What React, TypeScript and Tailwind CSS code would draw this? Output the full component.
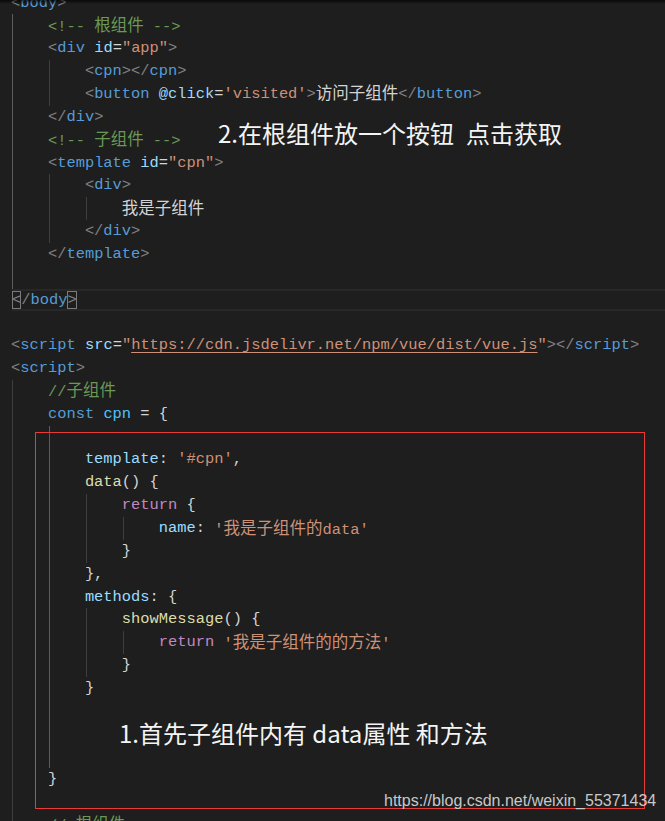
import React from "react";

type Tok = [string, string];
type Line = { ind: number; g: number; a?: number; t: Tok[]; cur?: boolean };

const P = "text-[#808080]";
const TAG = "text-[#569cd6]";
const ATTR = "text-[#9cdcfe]";
const TXT = "text-[#d4d4d4]";
const STR = "text-[#ce9178]";
const COM = "text-[#6a9955]";
const KW = "text-[#569cd6]";
const CONST = "text-[#4fc1ff]";
const FN = "text-[#dcdcaa]";
const RET = "text-[#c586c0]";
const URL = "text-[#ce9178] underline decoration-[#ce9178] underline-offset-[3px]";

const LINES: Line[] = [
  { ind: 0, g: 0, t: [["<", P], ["body", TAG], [">", P]] },
  { ind: 1, g: 1, a: 0, t: [["<!-- 根组件 -->", COM]] },
  { ind: 1, g: 1, a: 0, t: [["<", P], ["div", TAG], [" ", TXT], ["id", ATTR], ["=", TXT], ['"app"', STR], [">", P]] },
  { ind: 2, g: 2, a: 0, t: [["<", P], ["cpn", TAG], ["></", P], ["cpn", TAG], [">", P]] },
  { ind: 2, g: 2, a: 0, t: [["<", P], ["button", TAG], [" ", TXT], ["@click", ATTR], ["=", TXT], ["'visited'", STR], [">", P], ["访问子组件", TXT], ["</", P], ["button", TAG], [">", P]] },
  { ind: 1, g: 1, a: 0, t: [["</", P], ["div", TAG], [">", P]] },
  { ind: 1, g: 1, a: 0, t: [["<!-- 子组件 -->", COM]] },
  { ind: 1, g: 1, a: 0, t: [["<", P], ["template", TAG], [" ", TXT], ["id", ATTR], ["=", TXT], ['"cpn"', STR], [">", P]] },
  { ind: 2, g: 2, a: 0, t: [["<", P], ["div", TAG], [">", P]] },
  { ind: 3, g: 3, a: 0, t: [["我是子组件", TXT]] },
  { ind: 2, g: 2, a: 0, t: [["</", P], ["div", TAG], [">", P]] },
  { ind: 1, g: 1, a: 0, t: [["</", P], ["template", TAG], [">", P]] },
  { ind: 0, g: 1, a: 0, t: [] },
  { ind: 0, g: 0, cur: true, t: [] },
  { ind: 0, g: 0, t: [] },
  { ind: 0, g: 0, t: [["<", P], ["script", TAG], [" ", TXT], ["src", ATTR], ["=", TXT], ['"', STR], ["https://cdn.jsdelivr.net/npm/vue/dist/vue.js", URL], ['"', STR], ["></", P], ["script", TAG], [">", P]] },
  { ind: 0, g: 0, t: [["<", P], ["script", TAG], [">", P]] },
  { ind: 1, g: 1, t: [["//子组件", COM]] },
  { ind: 1, g: 1, t: [["const", KW], [" ", TXT], ["cpn", CONST], [" = {", TXT]] },
  { ind: 0, g: 2, a: 1, t: [] },
  { ind: 2, g: 2, a: 1, t: [["template", ATTR], [": ", TXT], ["'#cpn'", STR], [",", TXT]] },
  { ind: 2, g: 2, a: 1, t: [["data", FN], ["() {", TXT]] },
  { ind: 3, g: 3, a: 1, t: [["return", RET], [" {", TXT]] },
  { ind: 4, g: 4, a: 1, t: [["name", ATTR], [": ", TXT], ["'我是子组件的data'", STR]] },
  { ind: 3, g: 3, a: 1, t: [["}", TXT]] },
  { ind: 2, g: 2, a: 1, t: [["},", TXT]] },
  { ind: 2, g: 2, a: 1, t: [["methods", ATTR], [": {", TXT]] },
  { ind: 3, g: 3, a: 1, t: [["showMessage", FN], ["() {", TXT]] },
  { ind: 4, g: 4, a: 1, t: [["return", RET], [" ", TXT], ["'我是子组件的的方法'", STR]] },
  { ind: 3, g: 3, a: 1, t: [["}", TXT]] },
  { ind: 2, g: 2, a: 1, t: [["}", TXT]] },
  { ind: 0, g: 2, a: 1, t: [] },
  { ind: 0, g: 2, a: 1, t: [] },
  { ind: 0, g: 2, a: 1, t: [] },
  { ind: 1, g: 1, t: [["}", TXT]] },
  { ind: 0, g: 1, t: [] },
  { ind: 1, g: 1, t: [["// 根组件", COM]] },
];

function Text({ s }: { s: string }) {
  const parts = s.split(/([\u4e00-\u9fff]+)/);
  return (
    <>
      {parts.map((p, i) =>
        /[\u4e00-\u9fff]/.test(p) ? (
          <span key={i} className="text-[16.5px] font-['Noto_Sans_CJK_SC',sans-serif]">{p}</span>
        ) : (
          p
        )
      )}
    </>
  );
}

function CodeLine({ line }: { line: Line }) {
  const cols = Math.max(line.ind, line.g);
  if (line.cur) {
    return (
      <div className="h-[22.85px] flex items-center">
        <div className="ml-[1px] flex-1 h-full flex items-center border-y-2 border-[#282828]">
          <span className="w-[1ch] h-full flex items-center justify-center text-[#808080] shadow-[inset_0_0_0_1px_#7a7a7a]">&lt;</span>
          <span className={P}>/</span>
          <span className={TAG}>body</span>
          <span className="w-[1ch] h-full flex items-center justify-center text-[#808080] shadow-[inset_0_0_0_1px_#7a7a7a]">&gt;</span>
        </div>
      </div>
    );
  }
  return (
    <div className="h-[22.85px] flex items-center whitespace-pre">
      {Array.from({ length: cols }).map((_, i) => (
        <span key={i} className="relative w-[4ch] h-full shrink-0">
          {i < line.g && (
            <span
              className={
                i === line.a
                  ? "absolute left-[1px] top-0 bottom-0 w-px bg-[#5c5c5c]"
                  : "absolute left-[1px] top-0 bottom-0 w-px bg-[#3e3e3e]"
              }
            />
          )}
        </span>
      ))}
      {line.t.map(([s, c], i) => (
        <span key={i} className={c}>
          <Text s={s} />
        </span>
      ))}
    </div>
  );
}

export default function App() {
  return (
    <div className="relative w-full h-[821px] overflow-hidden bg-[#1e1e1e]">
      {/* Editor lines */}
      <div className="mt-[-8.4px] pl-[11px] font-['Liberation_Mono','Noto_Sans_CJK_SC',monospace] text-[15.4px] leading-[22.85px]">
        {LINES.map((l, i) => (
          <CodeLine key={i} line={l} />
        ))}
      </div>

      {/* Scroll shadow */}
      <div className="absolute top-0 left-0 right-0 h-[4px] bg-linear-to-b from-black/70 to-transparent" />

      {/* Red highlight box */}
      <div className="absolute left-[35px] top-[432px] w-[610px] h-[377px] border border-[#ea3a36]" />

      {/* Annotations */}
      <div className="absolute left-[218px] top-[121px] flex whitespace-pre text-[24px] leading-none text-[#f4f4f4] font-['Noto_Sans_CJK_SC',sans-serif]">
        <span>2.在根组件放一个按钮</span>
        <span className="ml-[12px]">点击获取</span>
      </div>
      <div className="absolute left-[119px] top-[721px] whitespace-pre text-[24px] leading-none text-[#f4f4f4] font-['Noto_Sans_CJK_SC',sans-serif]">
        1.首先子组件内有 data属性 和方法
      </div>

      {/* Watermark */}
      <div className="absolute left-[384px] top-[793px] text-[16px] leading-none text-[#c8c8c8] font-['Liberation_Sans',Arial,sans-serif]">
        https://blog.csdn.net/weixin_55371434
      </div>
    </div>
  );
}
